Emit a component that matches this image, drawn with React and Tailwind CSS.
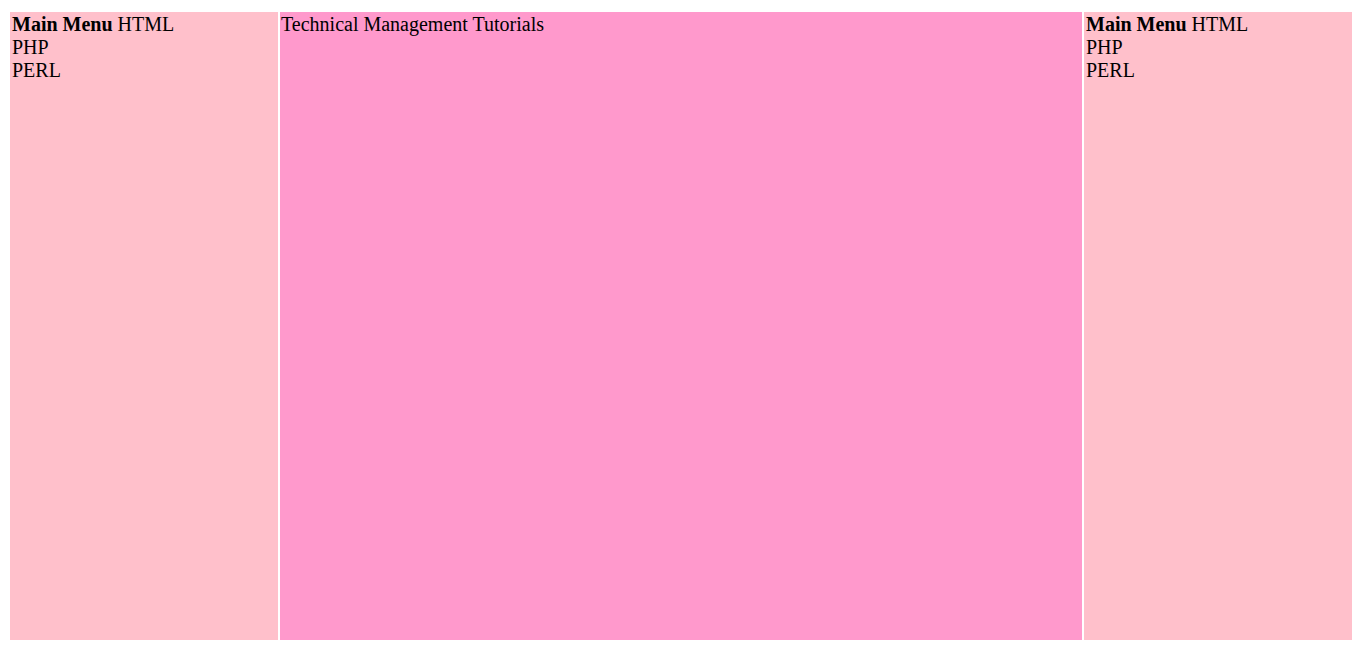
const SideMenu = () => (
    <div className="w-[268px] shrink-0 bg-[#ffc0cb] py-[1px] pl-[2px] pr-[1px]">
        <b>Main Menu</b> HTML
        <br />
        PHP
        <br />
        PERL
    </div>
);

export default function App() {
    return (
        <div className="bg-white min-h-screen pt-[12px] pl-[10px] font-['Liberation_Serif',serif] text-[20px] leading-[23px] text-black">
            <div className="flex gap-[2px] w-[1342px] h-[628px]">
                <SideMenu />
                <div className="flex-1 bg-[#ff99cc] p-[1px]">
                    Technical Management Tutorials
                </div>
                <SideMenu />
            </div>
        </div>
    );
}
